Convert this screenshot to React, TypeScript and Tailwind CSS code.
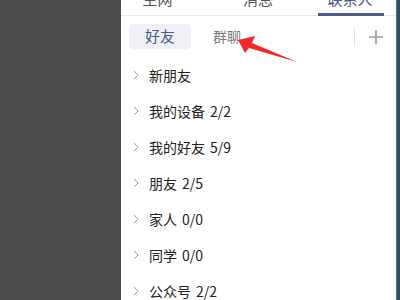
const groups = [
  { name: "新朋友", count: "" },
  { name: "我的设备", count: "2/2" },
  { name: "我的好友", count: "5/9" },
  { name: "朋友", count: "2/5" },
  { name: "家人", count: "0/0" },
  { name: "同学", count: "0/0" },
  { name: "公众号", count: "2/2" },
];

function Chevron() {
  return (
    <svg width="6" height="10" viewBox="0 0 6 10" className="shrink-0">
      <polyline points="1,1 5,5 1,9" fill="none" stroke="#9a9a9a" strokeWidth="1" />
    </svg>
  );
}

function Plus() {
  return (
    <svg width="14" height="14" viewBox="0 0 14 14" className="shrink-0">
      <path d="M7 0v14M0 7h14" stroke="#9b9b9b" strokeWidth="1.6" />
    </svg>
  );
}

export default function App() {
  return (
    <div
      className="w-[400px] h-[300px] flex overflow-hidden bg-[#4a4a4a]"
      style={{ fontFamily: '"Noto Sans CJK SC", "Noto Sans", sans-serif' }}
    >
      {/* dim backdrop */}
      <div className="w-[121px] shrink-0 bg-[#4a4a4a]" />

      {/* contacts panel */}
      <div className="relative w-[275px] shrink-0 bg-white flex flex-col overflow-hidden">
        {/* top tabs (scrolled off) */}
        <div className="flex shrink-0 h-[16px] border-b border-[#e8e8e8]">
          <div className="w-[91px] relative flex justify-center pr-[18px]">
            <span className="absolute bottom-[9px] text-[15px] leading-none text-[#555]">主网</span>
          </div>
          <div className="w-[92px] relative flex justify-center">
            <span className="absolute bottom-[9px] text-[15px] leading-none text-[#555]">消息</span>
          </div>
          <div className="w-[92px] relative flex justify-center">
            <span className="absolute bottom-[9px] text-[15px] leading-none text-[#4a5a85]">联系人</span>
            <div className="absolute bottom-[-1px] left-[14px] w-[66px] h-[3px] bg-[#4a5a85]" />
          </div>
        </div>

        {/* sub tabs */}
        <div className="flex shrink-0 items-center h-[41px] pl-[8px] pr-[13px]">
          <div className="w-[62px] h-[25px] rounded-[4px] bg-[#eef0f6] flex items-center justify-center text-[15px] text-[#4a5a85]">
            好友
          </div>
          <div className="ml-[22px] text-[14px] text-[#7a7a7a]">群聊</div>
          <div className="ml-auto w-px h-[19px] bg-[#e3e3e3]" />
          <div className="ml-[14px]">
            <Plus />
          </div>
        </div>

        {/* groups */}
        <div className="flex flex-col shrink-0">
          {groups.map((g) => (
            <div key={g.name} className="flex shrink-0 items-center h-[36px] pl-[12px] gap-[10px]">
              <Chevron />
              <span className="text-[14px] text-[#222]">
                {g.name}
                {g.count && <span className="ml-[5px]">{g.count}</span>}
              </span>
            </div>
          ))}
        </div>

        {/* annotation arrow */}
        <svg className="absolute left-0 top-0 pointer-events-none" width="275" height="300" viewBox="121 0 275 300">
          <polygon
            points="238,40 255,36 252,43 297,62 249,48 245,53"
            fill="#f02a2a"
          />
        </svg>
      </div>

      {/* window edge */}
      <div className="w-px shrink-0 bg-[#1a7fd0]" />
      <div className="flex-1 bg-[#474747]" />
    </div>
  );
}
